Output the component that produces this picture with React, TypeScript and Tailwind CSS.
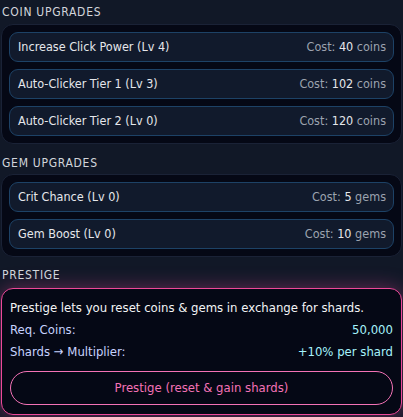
type Upgrade = { name: string; cost: string; unit: string };

const coinUpgrades: Upgrade[] = [
  { name: "Increase Click Power (Lv 4)", cost: "40", unit: "coins" },
  { name: "Auto-Clicker Tier 1 (Lv 3)", cost: "102", unit: "coins" },
  { name: "Auto-Clicker Tier 2 (Lv 0)", cost: "120", unit: "coins" },
];

const gemUpgrades: Upgrade[] = [
  { name: "Crit Chance (Lv 0)", cost: "5", unit: "gems" },
  { name: "Gem Boost (Lv 0)", cost: "10", unit: "gems" },
];

function Heading({ children }: { children: string }) {
  return (
    <h2 className="pl-[1px] text-[12px] leading-4 uppercase tracking-[0.06em] text-[#d1d5db]">
      {children}
    </h2>
  );
}

function UpgradeRow({ u }: { u: Upgrade }) {
  return (
    <button className="flex h-[30px] w-full items-center justify-between rounded-[9px] border border-[#1d4266] bg-[#111a2c] pl-2 pr-[7px] text-left">
      <span className="text-[#e5e7eb]">{u.name}</span>
      <span className="text-[#9ca3af]">
        Cost: <span className="text-[#e5e7eb]">{u.cost}</span> {u.unit}
      </span>
    </button>
  );
}

function UpgradePanel({ items }: { items: Upgrade[] }) {
  return (
    <div className="flex flex-col gap-[7px] rounded-xl border border-[#1a2236] bg-[#050815] p-[7px]">
      {items.map((u) => (
        <UpgradeRow key={u.name} u={u} />
      ))}
    </div>
  );
}

export default function App() {
  return (
    <div
      className="min-h-[417px] bg-[#111827] px-[1px] pt-1 text-[12.5px]"
      style={{ fontFamily: "'DejaVu Sans Condensed', 'DejaVu Sans', sans-serif" }}
    >
      <section>
        <Heading>Coin Upgrades</Heading>
        <div className="mt-1">
          <UpgradePanel items={coinUpgrades} />
        </div>
      </section>

      <section className="mt-[11px]">
        <Heading>Gem Upgrades</Heading>
        <div className="mt-[3px]">
          <UpgradePanel items={gemUpgrades} />
        </div>
      </section>

      <section className="mt-[10px]">
        <Heading>Prestige</Heading>
        <div className="mt-[5px] rounded-xl border border-[#ec4899] bg-[#050815] px-2 pt-2 pb-[9px] text-[13px] shadow-[0_0_20px_rgba(236,72,153,0.4)]">
          <p className="leading-[22px] text-[#f3f4f6]">
            Prestige lets you reset coins &amp; gems in exchange for shards.
          </p>
          <div className="flex justify-between leading-[22px]">
            <span className="text-[#c7d2fe]">Req. Coins:</span>
            <span className="text-[#a5f3fc]">50,000</span>
          </div>
          <div className="flex justify-between leading-[22px]">
            <span className="text-[#c7d2fe]">Shards → Multiplier:</span>
            <span className="text-[#a5f3fc]">+10% per shard</span>
          </div>
          <button className="mt-2 flex h-[34px] w-full items-center justify-center rounded-full border border-[#f472b6] text-[#f472b6]">
            Prestige (reset &amp; gain shards)
          </button>
        </div>
      </section>
    </div>
  );
}
